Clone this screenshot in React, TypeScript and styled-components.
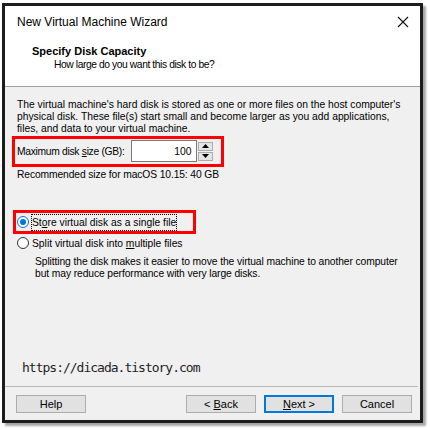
import React from "react";
import styled, { createGlobalStyle } from "styled-components";

const Global = createGlobalStyle`
  html, body { margin: 0; padding: 0; background: #ffffff; }
  body { font-family: "Liberation Sans", Arial, sans-serif; color: #000; }
  * { box-sizing: border-box; }
`;

const Page = styled.div`
  width: 430px;
  height: 430px;
  padding: 3px 0 0 2px;
  background: #ffffff;
`;

const Window = styled.div`
  width: 421px;
  height: 420px;
  border: 3px solid #1c1c1c;
  background: #f0f0f0;
  display: flex;
  flex-direction: column;
  box-shadow: 3px 3px 2px rgba(0, 0, 0, 0.35);
  font-size: 10.3px;
`;

const Header = styled.div`
  background: #ffffff;
  height: 81px;
  border-bottom: 1px solid #a0a0a0;
  display: flex;
  flex-direction: column;
`;

const TitleBar = styled.div`
  height: 32px;
  display: flex;
  align-items: center;
  justify-content: space-between;
  padding: 0 10px 0 12px;
`;

const TitleText = styled.span`
  font-size: 12px;
`;

const CloseBtn = styled.span`
  display: flex;
  align-items: center;
  justify-content: center;
  width: 14px;
  height: 14px;
`;

const Heading = styled.div`
  margin-top: 6px;
  padding-left: 27px;
  font-weight: bold;
  font-size: 11px;
  line-height: 14px;
`;

const SubHeading = styled.div`
  padding-left: 49px;
  line-height: 14px;
  letter-spacing: -0.42px;
`;

const Body = styled.div`
  flex: 1;
  display: flex;
  flex-direction: column;
  padding: 12px 0 0 7px;
`;

const Para = styled.p<{ $indent?: number; $ls?: number; $top?: number }>`
  margin: ${(p) => p.$top ?? 0}px 0 0 0;
  padding-left: ${(p) => p.$indent ?? 5}px;
  line-height: 12px;
  white-space: nowrap;
  letter-spacing: ${(p) => p.$ls ?? 0}px;
`;

const RedBox = styled.div<{ $pad: string; $top: number; $left?: number }>`
  align-self: flex-start;
  margin-top: ${(p) => p.$top}px;
  margin-left: ${(p) => p.$left ?? 0}px;
  border: 3px solid #ff0000;
  padding: ${(p) => p.$pad};
  display: flex;
  align-items: center;
`;

const FieldLabel = styled.span`
  margin-right: 6px;
  white-space: nowrap;
  letter-spacing: -0.3px;
`;

const NumberInput = styled.div`
  width: 66px;
  height: 22px;
  border: 1px solid #7a7a7a;
  background: #ffffff;
  display: flex;
  align-items: center;
  justify-content: flex-end;
  padding-right: 4px;
`;

const Spinner = styled.div`
  display: flex;
  flex-direction: column;
  gap: 1px;
  margin-left: 1px;
`;

const SpinBtn = styled.div`
  width: 15px;
  height: 9px;
  border: 1px solid #adadad;
  background: #e5e5e5;
  display: flex;
  align-items: center;
  justify-content: center;
`;

const U = styled.span`
  text-decoration: underline;
  text-underline-offset: 1px;
`;

const RadioRow = styled.label<{ $inset?: number }>`
  display: flex;
  align-items: center;
  height: 18px;
  padding-left: ${(p) => p.$inset ?? 5}px;
`;

const RadioCircle = styled.span<{ $on?: boolean }>`
  width: 12px;
  height: 12px;
  border-radius: 50%;
  border: 1px solid ${(p) => (p.$on ? "#0078d7" : "#333333")};
  background: #ffffff;
  display: flex;
  align-items: center;
  justify-content: center;
  margin-right: 2px;
  flex: none;
  &::after {
    content: "";
    width: 6px;
    height: 6px;
    border-radius: 50%;
    background: ${(p) => (p.$on ? "#0078d7" : "transparent")};
  }
`;

const RadioLabel = styled.span<{ $focus?: boolean }>`
  padding: 1px 0;
  border: 1px dotted ${(p) => (p.$focus ? "#000" : "transparent")};
  white-space: nowrap;
  line-height: 13px;
`;

const Watermark = styled.div`
  margin-top: auto;
  margin-bottom: 10px;
  padding-left: 10px;
  font-family: "DejaVu Sans Mono", monospace;
  font-size: 13px;
  letter-spacing: -1px;
  line-height: 16px;
  color: #1e1e1e;
`;

const Footer = styled.div`
  height: 34px;
  border-top: 1px solid #b9b9b9;
  margin-right: 2px;
  display: flex;
  align-items: flex-start;
  padding: 8px 6px 0 11px;
`;

const Spacer = styled.div`
  flex: 1;
`;

const Button = styled.div<{ $default?: boolean; $gap?: number }>`
  width: 70px;
  height: 18px;
  margin-left: ${(p) => p.$gap ?? 0}px;
  background: #e1e1e1;
  border: ${(p) => (p.$default ? "2px solid #0078d7" : "1px solid #adadad")};
  display: flex;
  align-items: center;
  justify-content: center;
  font-size: 11px;
  white-space: pre;
`;

const CloseIcon = () => (
  <svg width="12" height="12" viewBox="0 0 12 12">
    <path d="M1 1 L11 11 M11 1 L1 11" stroke="#111" strokeWidth="1.1" fill="none" />
  </svg>
);

const UpTri = () => (
  <svg width="7" height="4" viewBox="0 0 7 4">
    <path d="M3.5 0 L7 4 L0 4 Z" fill="#000" />
  </svg>
);

const DownTri = () => (
  <svg width="7" height="4" viewBox="0 0 7 4">
    <path d="M0 0 L7 0 L3.5 4 Z" fill="#000" />
  </svg>
);

export default function App() {
  return (
    <>
      <Global />
      <Page>
        <Window>
          <Header>
            <TitleBar>
              <TitleText>New Virtual Machine Wizard</TitleText>
              <CloseBtn>
                <CloseIcon />
              </CloseBtn>
            </TitleBar>
            <Heading>Specify Disk Capacity</Heading>
            <SubHeading>How large do you want this disk to be?</SubHeading>
          </Header>
          <Body>
            <Para $indent={5}>
              The virtual machine's hard disk is stored as one or more files on the host computer's
              <br />
              physical disk. These file(s) start small and become larger as you add applications,
              <br />
              files, and data to your virtual machine.
            </Para>
            <RedBox $top={1} $pad="1px 8px 2px 2px">
              <FieldLabel>
                Maximum disk <U>s</U>ize (GB):
              </FieldLabel>
              <NumberInput>100</NumberInput>
              <Spinner>
                <SpinBtn>
                  <UpTri />
                </SpinBtn>
                <SpinBtn>
                  <DownTri />
                </SpinBtn>
              </Spinner>
            </RedBox>
            <Para $indent={5} $ls={-0.12} $top={2}>
              Recommended size for macOS 10.15: 40 GB
            </Para>
            <RedBox $top={29} $left={1} $pad="0 16px 0 1px">
              <RadioRow $inset={0}>
                <RadioCircle $on />
                <RadioLabel $focus>
                  St<U>o</U>re virtual disk as a single file
                </RadioLabel>
              </RadioRow>
            </RedBox>
            <RadioRow>
              <RadioCircle />
              <RadioLabel>
                Split virtual disk into <U>m</U>ultiple files
              </RadioLabel>
            </RadioRow>
            <Para $indent={23} $ls={-0.1} $top={4}>
              Splitting the disk makes it easier to move the virtual machine to another computer
              <br />
              but may reduce performance with very large disks.
            </Para>
            <Watermark>https://dicada.tistory.com</Watermark>
          </Body>
          <Footer>
            <Button>Help</Button>
            <Spacer />
            <Button>
              {"< "}
              <U>B</U>ack
            </Button>
            <Button $default $gap={8}>
              <U>N</U>ext &gt;
            </Button>
            <Button $gap={8}>Cancel</Button>
          </Footer>
        </Window>
      </Page>
    </>
  );
}
